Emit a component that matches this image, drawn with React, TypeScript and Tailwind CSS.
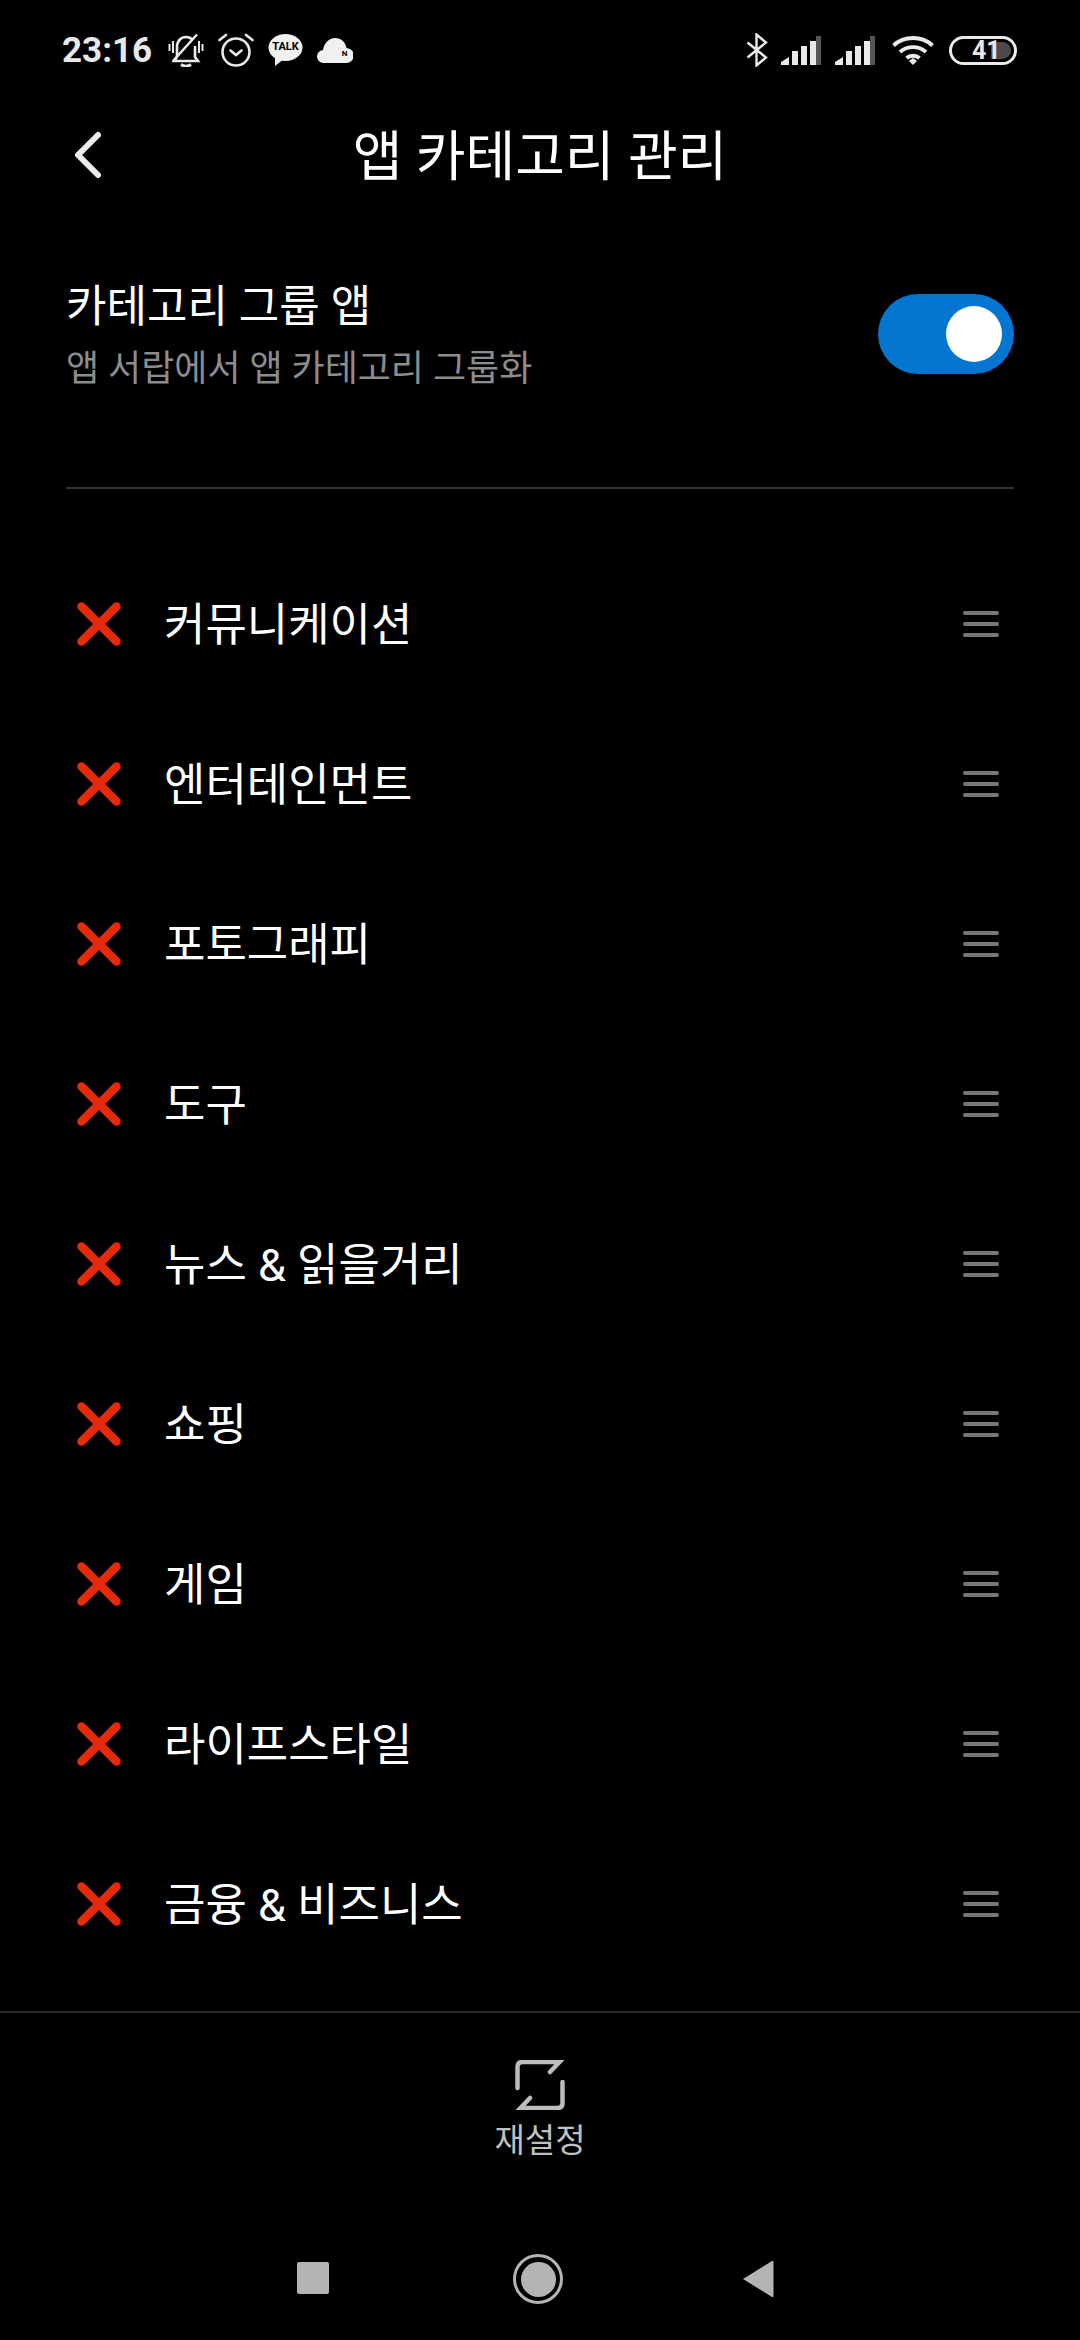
const rows = ['커뮤니케이션', '엔터테인먼트', '포토그래피', '도구', '뉴스 & 읽을거리', '쇼핑', '게임', '라이프스타일', '금융 & 비즈니스'];

function Bell() {
  return (
    <svg width="36" height="34" viewBox="0 0 36 34" fill="none" stroke="#eaeaea" strokeWidth="2.600">
      <path d="M9 24V14c0-6 4-10 9-10 3 0 5 1 7 3M27 13v11l3 4H6l3-4" />
      <path d="M13 31.500c3 2 7 2 10 0" strokeWidth="3" />
      <path d="M5 28 29 1.500" />
      <path d="M1.500 11v7M5 8v12M31 8v12M34.500 11v7" strokeWidth="2" />
    </svg>
  );
}
function Alarm() {
  return (
    <svg width="36" height="34" viewBox="0 0 36 34" fill="none" stroke="#eaeaea" strokeWidth="2.600" strokeLinecap="round">
      <circle cx="18" cy="19" r="13.500" />
      <path d="M1.500 7 8 2M34.500 7 28 2" />
      <path d="M12.500 17.500 18 22l5.500-4.500" />
    </svg>
  );
}
function Talk() {
  return (
    <div className="relative w-[35px] h-[32px]">
      <svg width="35" height="32" viewBox="0 0 35 32" className="absolute left-0 top-0">
        <ellipse cx="17.500" cy="13.500" rx="17" ry="13.500" fill="#f0f0f0" />
        <path d="M7 22v10l9-7z" fill="#f0f0f0" />
      </svg>
      <span className="absolute left-0 top-[6px] w-[35px] text-center text-[11px] leading-[14px] font-bold text-black font-['Roboto',sans-serif]">TALK</span>
    </div>
  );
}
function Cloud() {
  return (
    <div className="relative w-[36px] h-[25px]">
      <svg width="36" height="25" viewBox="0 0 36 25" className="absolute left-0 top-0">
        <path d="M7 25a6.500 6.500 0 0 1-1-13C7 5 12 0 18 0c6 0 10.500 4 11.500 10A7.500 7.500 0 0 1 29 25z" fill="#f0f0f0" />
      </svg>
      <span className="absolute left-[23px] top-[11px] w-[9px] text-center text-[8px] leading-[10px] font-bold text-black font-['Roboto',sans-serif]">N</span>
    </div>
  );
}
function Bt() {
  return (
    <svg width="22" height="34" viewBox="0 0 22 34" fill="none" stroke="#eaeaea" strokeWidth="2.400">
      <path d="M1.500 9.500 20 24.500 10.500 32.500V1.500L20 9.500 1.500 24.500" />
    </svg>
  );
}
function Signal() {
  return (
    <svg width="40" height="29" viewBox="0 0 40 29">
      <path d="M0 29v-3l8-5v8z" fill="#eaeaea" />
      <rect x="11" y="15" width="6" height="14" fill="#eaeaea" />
      <rect x="20" y="10" width="6" height="19" fill="#eaeaea" />
      <rect x="29" y="5" width="6" height="24" fill="#eaeaea" />
      <rect x="35" y="0" width="5" height="29" fill="#555" />
    </svg>
  );
}
function Wifi() {
  return (
    <svg width="42" height="30" viewBox="0 0 42 30" fill="none" stroke="#eaeaea" strokeWidth="3.800">
      <path d="M1.500 10.500C12 .5 30 .5 40.500 10.500" />
      <path d="M8 17c7.500-6.500 18.500-6.500 26 0" />
      <path d="M14.500 23c3.500-3 9.500-3 13 0" />
      <path d="m21 30-4-4 4-3 4 3z" fill="#eaeaea" stroke="none" />
    </svg>
  );
}
function Battery() {
  return (
    <div className="relative w-[68px] h-[29px] rounded-full border-[3px] border-[#eaeaea]">
      <div className="absolute left-[39px] top-[3px] w-[20px] h-[17px] rounded-r-full bg-[#4a4a4a]" />
      <span className="absolute left-[20px] top-0 w-[24px] text-center text-[25px] leading-[23px] font-bold text-[#e8e8e8] font-['Roboto',sans-serif]">41</span>
    </div>
  );
}
function Cross() {
  return (
    <svg width="44" height="44" viewBox="0 0 44 44" fill="none" stroke="#e62b0a" strokeWidth="8.500" strokeLinecap="round">
      <path d="M4.500 4.500 39.500 39.500M39.500 4.500 4.500 39.500" />
    </svg>
  );
}
function Handle() {
  return (
    <div className="flex flex-col gap-[7px] w-[36px]">
      <div className="h-[4px] bg-[#777777] rounded-full" />
      <div className="h-[4px] bg-[#777777] rounded-full" />
      <div className="h-[4px] bg-[#777777] rounded-full" />
    </div>
  );
}

export default function App() {
  return (
    <div className="w-[1080px] h-[2340px] bg-black text-white flex flex-col overflow-hidden font-['Roboto','Noto_Sans_CJK_KR','Noto_Sans_CJK_SC',sans-serif]">
      {/* status bar */}
      <div className="h-[100px] flex items-center justify-between pl-[62px] pr-[63px]">
        <div className="flex items-center">
          <span className="text-[35px] leading-none font-bold text-[#e8e8e8] font-['Roboto',sans-serif] w-[106px]">23:16</span>
          <div className="flex items-center gap-[14px]">
            <Bell />
            <Alarm />
            <Talk />
            <Cloud />
          </div>
        </div>
        <div className="flex items-center">
          <Bt />
          <div className="ml-[13px] flex gap-[14px]">
            <Signal />
            <Signal />
          </div>
          <div className="ml-[17px]"><Wifi /></div>
          <div className="ml-[15px]"><Battery /></div>
        </div>
      </div>

      {/* header */}
      <div className="relative h-[106px] flex items-center justify-center">
        <svg width="30" height="50" viewBox="0 0 30 50" fill="none" stroke="#ececec" strokeWidth="6" strokeLinecap="round" strokeLinejoin="round" className="absolute left-[73px] top-[30px]">
          <path d="M25 5 5 25l20 20" />
        </svg>
        <h1 className="mt-[9px] text-[54px] leading-none font-normal text-white">앱 카테고리 관리</h1>
      </div>

      {/* toggle section */}
      <div className="mt-[62px] px-[66px] flex items-center justify-between h-[131px]">
        <div className="flex flex-col pt-[6px]">
          <span className="text-[44px] leading-[58px] text-white">카테고리 그룹 앱</span>
          <span className="mt-[7px] text-[36px] leading-[52px] text-[#8c8c8c]">앱 서랍에서 앱 카테고리 그룹화</span>
        </div>
        <div className="w-[136px] h-[80px] rounded-full bg-[#0475d0] flex items-center justify-end pr-[12px]">
          <div className="w-[56px] h-[56px] rounded-full bg-white" />
        </div>
      </div>

      <div className="mx-[66px] mt-[88px] h-[2px] bg-[#333333]" />

      {/* list */}
      <div className="mt-[55px] flex flex-col">
        {rows.map((r) => (
          <div key={r} className="h-[160px] flex items-center pl-[77px] pr-[81px]">
            <Cross />
            <span className="ml-[43px] mt-[3px] flex-1 text-[45px] leading-none text-white">{r}</span>
            <Handle />
          </div>
        ))}
      </div>

      {/* reset */}
      <div className="mt-[27px] h-[2px] bg-[#2c2c2c]" />
      <div className="flex flex-col items-center pt-[47px]">
        <svg width="50" height="50" viewBox="0 0 50 50" fill="none" stroke="#bcbcbc" strokeWidth="4.500" strokeLinecap="round">
          <path d="M2.500 28V7q0-5 5-5h37L35 12" />
          <path d="M47.500 22v21q0 5-5 5H5.500L15 38" />
        </svg>
        <span className="mt-[7px] text-[33px] leading-[48px] text-[#c0c0c0]">재설정</span>
      </div>

      {/* nav */}
      <div className="relative mt-[89px] h-[50px]">
        <div className="absolute left-[297px] top-[8px] w-[32px] h-[32px] rounded-[2px] bg-[#b4b4b4]" />
        <div className="absolute left-[513px] top-0 w-[50px] h-[50px] rounded-full border-[3px] border-[#b4b4b4] flex items-center justify-center">
          <div className="w-[35px] h-[35px] rounded-full bg-[#b4b4b4]" />
        </div>
        <svg width="32" height="38" viewBox="0 0 32 38" className="absolute left-[742px] top-[6px]">
          <path d="M1 19 30 1q1.500-.5 1.500 1v34q0 1.500-1.500 1z" fill="#b4b4b4" />
        </svg>
      </div>
    </div>
  );
}
